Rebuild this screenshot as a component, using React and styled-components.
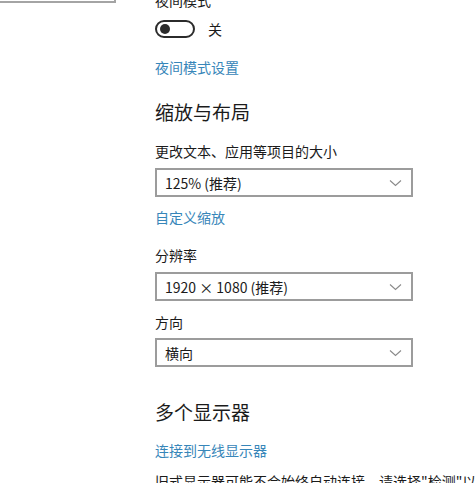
import React from 'react';
import styled, { createGlobalStyle } from 'styled-components';

const Global = createGlobalStyle`
  html, body {
    margin: 0;
    padding: 0;
    background: #fff;
    overflow: hidden;
  }
  body {
    font-family: "Noto Sans CJK SC", "Noto Sans", "Liberation Sans", sans-serif;
    color: #1b1b1b;
  }
`;

const Page = styled.div`
  display: flex;
  align-items: flex-start;
  width: 475px;
  height: 483px;
  overflow: hidden;
`;

const Side = styled.div`
  width: 155px;
  flex-shrink: 0;
`;

const Preview = styled.div`
  width: 118px;
  height: 40px;
  margin-top: -37px;
  margin-left: -2px;
  border: 2px solid #a4a4a4;
  box-sizing: border-box;
`;

const Content = styled.div`
  display: flex;
  flex-direction: column;
  align-items: flex-start;
  width: 300px;

  & > * {
    flex-shrink: 0;
  }
`;

const Label = styled.div`
  font-size: 14px;
  line-height: 20px;
  margin-top: ${p => p.$mt || 0}px;
  white-space: nowrap;
`;

const Link = styled.a`
  font-size: 14px;
  line-height: 20px;
  color: #3786b9;
  text-decoration: none;
  margin-top: ${p => p.$mt || 0}px;
`;

const Heading = styled.h2`
  font-size: 19px;
  line-height: 28px;
  font-weight: 400;
  margin: ${p => p.$mt || 0}px 0 0;
`;

const ToggleRow = styled.div`
  display: flex;
  align-items: center;
  gap: 13px;
  margin-top: 10px;
  height: 18px;
  font-size: 14px;
`;

const Track = styled.div`
  width: 40px;
  height: 18px;
  border: 2px solid #2b2b2b;
  border-radius: 10px;
  box-sizing: border-box;
  display: flex;
  align-items: center;
  padding-left: 3px;
`;

const Knob = styled.span`
  width: 10px;
  height: 10px;
  border-radius: 50%;
  background: #2b2b2b;
`;

const Select = styled.div`
  width: 258px;
  height: 29px;
  box-sizing: border-box;
  border: 2px solid #9c9c9c;
  display: flex;
  align-items: center;
  justify-content: space-between;
  padding: 0 9px 0 8px;
  font-size: 14px;
  margin-top: ${p => p.$mt || 0}px;
`;

const Chevron = () => (
  <svg width="13" height="8" viewBox="0 0 13 8">
    <path d="M1 1.5 L6.5 6.5 L12 1.5" fill="none" stroke="#8a8a8a" strokeWidth="1.1" />
  </svg>
);

const Dropdown = ({ value, mt }) => (
  <Select $mt={mt}>
    <span>{value}</span>
    <Chevron />
  </Select>
);

export default function App() {
  return (
    <>
      <Global />
      <Page>
        <Side>
          <Preview />
        </Side>
        <Content>
          <Label $mt={-10}>夜间模式</Label>
          <ToggleRow>
            <Track><Knob /></Track>
            <span>关</span>
          </ToggleRow>
          <Link $mt={19}>夜间模式设置</Link>

          <Heading $mt={21}>缩放与布局</Heading>
          <Label $mt={15}>更改文本、应用等项目的大小</Label>
          <Dropdown value="125% (推荐)" mt={7} />
          <Link $mt={10}>自定义缩放</Link>
          <Label $mt={18}>分辨率</Label>
          <Dropdown value="1920 × 1080 (推荐)" mt={7} />
          <Label $mt={11}>方向</Label>
          <Dropdown value="横向" mt={6} />

          <Heading $mt={31}>多个显示器</Heading>
          <Link $mt={14}>连接到无线显示器</Link>
          <Label $mt={11}>旧式显示器可能不会始终自动连接，请选择"检测"以尝试连接。</Label>
        </Content>
      </Page>
    </>
  );
}
